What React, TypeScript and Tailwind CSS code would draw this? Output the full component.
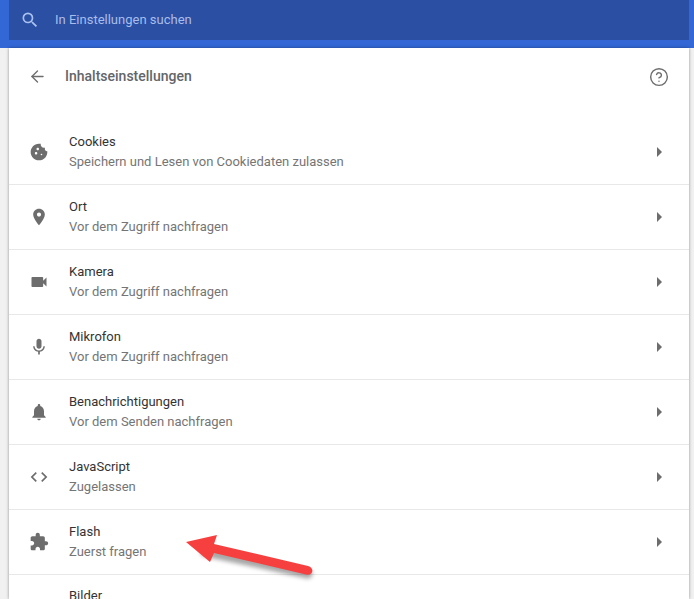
import { ArrowLeft, CircleHelp } from "lucide-react";
import type { ReactNode } from "react";

const G = ({ children }: { children: ReactNode }) => (
  <svg width="24" height="24" viewBox="0 0 24 24" fill="#6d6d6d">
    {children}
  </svg>
);

const rows: { title: string; sub: string; icon: ReactNode }[] = [
  {
    title: "Cookies",
    sub: "Speichern und Lesen von Cookiedaten zulassen",
    icon: (
      <G>
        <path d="M21.95 10.99c-1.79-.03-3.7-1.95-2.68-4.22-2.97 1-5.78-1.59-5.19-4.56C7.11.74 2 6.41 2 12c0 5.52 4.48 10 10 10 5.89 0 10.54-5.08 9.95-11.01zM8.5 15c-.83 0-1.5-.67-1.5-1.5S7.67 12 8.5 12s1.5.67 1.5 1.5S9.33 15 8.5 15zm2-5C9.67 10 9 9.33 9 8.5S9.67 7 10.5 7s1.5.67 1.5 1.5-.67 1.5-1.5 1.5zm4.5 6c-.55 0-1-.45-1-1s.45-1 1-1 1 .45 1 1-.45 1-1 1z" />
      </G>
    ),
  },
  {
    title: "Ort",
    sub: "Vor dem Zugriff nachfragen",
    icon: (
      <G>
        <path d="M12 2C8.13 2 5 5.13 5 9c0 5.25 7 13 7 13s7-7.75 7-13c0-3.87-3.13-7-7-7zm0 9.5c-1.38 0-2.5-1.12-2.5-2.5s1.12-2.5 2.5-2.5 2.5 1.12 2.5 2.5-1.12 2.5-2.5 2.5z" />
      </G>
    ),
  },
  {
    title: "Kamera",
    sub: "Vor dem Zugriff nachfragen",
    icon: (
      <G>
        <path d="M17 10.5V7c0-.55-.45-1-1-1H4c-.55 0-1 .45-1 1v10c0 .55.45 1 1 1h12c.55 0 1-.45 1-1v-3.5l4 4v-11l-4 4z" />
      </G>
    ),
  },
  {
    title: "Mikrofon",
    sub: "Vor dem Zugriff nachfragen",
    icon: (
      <G>
        <path d="M12 14c1.66 0 2.99-1.34 2.99-3L15 5c0-1.66-1.34-3-3-3S9 3.34 9 5v6c0 1.66 1.34 3 3 3zm5.3-3c0 3-2.54 5.1-5.3 5.1S6.7 14 6.7 11H5c0 3.41 2.72 6.23 6 6.72V21h2v-3.28c3.28-.48 6-3.3 6-6.72h-1.7z" />
      </G>
    ),
  },
  {
    title: "Benachrichtigungen",
    sub: "Vor dem Senden nachfragen",
    icon: (
      <G>
        <path d="M12 22c1.1 0 2-.9 2-2h-4c0 1.1.89 2 2 2zm6-6v-5c0-3.07-1.64-5.64-4.5-6.32V4c0-.83-.67-1.5-1.5-1.5s-1.5.67-1.5 1.5v.68C7.63 5.36 6 7.92 6 11v5l-2 2v1h16v-1l-2-2z" />
      </G>
    ),
  },
  {
    title: "JavaScript",
    sub: "Zugelassen",
    icon: (
      <G>
        <path d="M9.4 16.6 4.8 12l4.6-4.6L8 6l-6 6 6 6 1.4-1.4zm5.2 0 4.6-4.6-4.6-4.6L16 6l6 6-6 6-1.4-1.4z" />
      </G>
    ),
  },
  {
    title: "Flash",
    sub: "Zuerst fragen",
    icon: (
      <G>
        <path d="M20.5 11H19V7c0-1.1-.9-2-2-2h-4V3.5C13 2.12 11.88 1 10.5 1S8 2.12 8 3.5V5H4c-1.1 0-1.99.9-1.99 2v3.8H3.5c1.49 0 2.7 1.21 2.7 2.7s-1.21 2.7-2.7 2.7H2V20c0 1.1.9 2 2 2h3.8v-1.5c0-1.49 1.21-2.7 2.7-2.7 1.49 0 2.7 1.21 2.7 2.7V22H17c1.1 0 2-.9 2-2v-4h1.5c1.38 0 2.5-1.12 2.5-2.5S21.88 11 20.5 11z" />
      </G>
    ),
  },
];

export default function App() {
  return (
    <div className="relative h-[599px] w-[694px] overflow-hidden bg-[#f1f1f1] font-['Roboto',sans-serif]">
      <div className="h-12 bg-[#3367d6] pl-[9px] pr-[5px]">
        <div className="flex h-10 items-center bg-[#2a4fa3] pl-[11px]">
          <svg width="20" height="20" viewBox="0 0 24 24" fill="#a9c1f0">
            <path d="M15.5 14h-.79l-.28-.27A6.47 6.47 0 0 0 16 9.5 6.5 6.5 0 1 0 9.5 16c1.61 0 3.09-.59 4.23-1.57l.27.28v.79l5 4.99L20.49 19l-4.99-5zm-6 0C7.01 14 5 11.99 5 9.5S7.01 5 9.5 5 14 7.01 14 9.5 11.99 14 9.5 14z" />
          </svg>
          <span className="ml-[15px] text-[13px] text-[#a9bdea]">In Einstellungen suchen</span>
        </div>
      </div>

      <div className="ml-[9px] mr-[5px] h-[551px] bg-white shadow-[0_0_3px_rgba(0,0,0,0.4)]">
        <div className="flex h-[56px] items-center pl-[19px] pr-[20px] pt-[1px]">
          <ArrowLeft size={19} color="#6d6d6d" strokeWidth={1.7} />
          <span className="ml-[18px] flex-1 text-[14px] font-medium text-[#62666a]">Inhaltseinstellungen</span>
          <CircleHelp size={20} color="#6d6d6d" strokeWidth={1.7} />
        </div>

        <div className="mt-[16px]">
          {rows.map((r) => (
            <div key={r.title} className="flex h-[65px] items-center border-b border-[#e8e8e8] pb-[1px] pl-[20px] pr-[27px]">
              <div className="flex w-5 justify-center">{r.icon}</div>
              <div className="ml-[20px] flex-1">
                <div className="text-[13px] leading-[20px] text-[#333333]">{r.title}</div>
                <div className="text-[13px] leading-[20px] text-[#757575]">{r.sub}</div>
              </div>
              <div className="h-0 w-0 border-y-[5px] border-l-[5px] border-y-transparent border-l-[#6d6d6d]" />
            </div>
          ))}
          <div className="pl-[60px] pt-[11px] text-[13px] leading-[20px] text-[#333333]">Bilder</div>
        </div>
      </div>

      <svg className="absolute left-0 top-0" width="694" height="599" viewBox="0 0 694 599" fill="none">
        <path className="blur-[2px]" d="M205 552 L308 574" stroke="#000" strokeOpacity="0.35" strokeWidth="9" strokeLinecap="round" />
        <path d="M186 542 L217 535 L214 544 L308 566 C315 568 313 576 306 574.5 L214 553 L210 562 Z" fill="#f6403f" />
      </svg>
    </div>
  );
}
